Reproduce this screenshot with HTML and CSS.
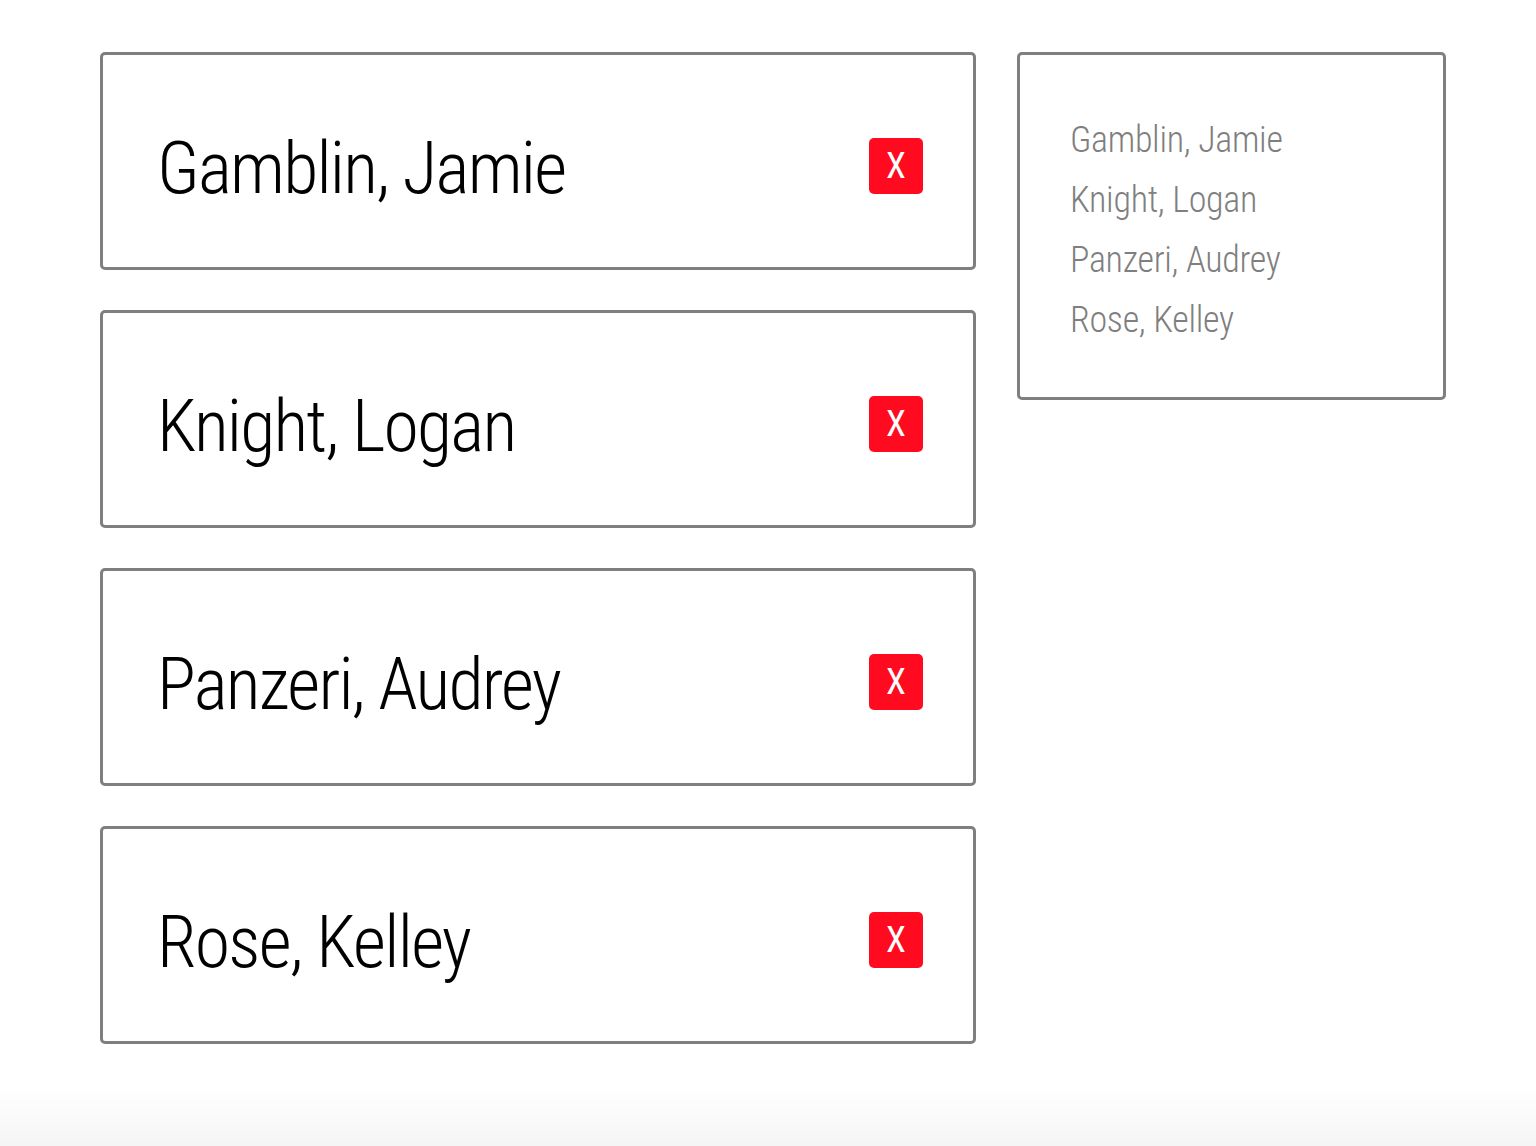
FILE: index.html
```html
<!DOCTYPE html>
<html lang="en">
<head>
<meta charset="utf-8">
<title>Roster</title>
<link rel="stylesheet" href="styles.css">
</head>
<body>
<main class="page">
  <section class="cards">
    <div class="card"><span class="name">Gamblin, Jamie</span><button class="remove" type="button">X</button></div>
    <div class="card"><span class="name">Knight, Logan</span><button class="remove" type="button">X</button></div>
    <div class="card"><span class="name">Panzeri, Audrey</span><button class="remove" type="button">X</button></div>
    <div class="card"><span class="name">Rose, Kelley</span><button class="remove" type="button">X</button></div>
  </section>
  <aside class="summary">
    <ul class="summary-list">
      <li>Gamblin, Jamie</li>
      <li>Knight, Logan</li>
      <li>Panzeri, Audrey</li>
      <li>Rose, Kelley</li>
    </ul>
  </aside>
</main>
</body>
</html>
```
FILE: styles.css
```css
html { height: 100%; }
body {
  margin: 0;
  min-height: 100%;
  background: linear-gradient(to bottom, #ffffff calc(100% - 60px), #f5f5f5 100%);
  font-family: "Roboto Condensed", "Roboto", sans-serif;
  font-stretch: condensed;
}
.page {
  display: flex;
  align-items: flex-start;
  gap: 41px;
  padding: 52px 0 0 100px;
}
.cards {
  display: flex;
  flex-direction: column;
  gap: 40px;
  width: 876px;
}
.card {
  box-sizing: border-box;
  height: 218px;
  border: 3px solid #7f7f7f;
  border-radius: 5px;
  display: flex;
  align-items: center;
  justify-content: space-between;
  padding: 10px 50px 0 54px;
  background: #fff;
}
.name {
  font-size: 72px;
  font-weight: 350;
  letter-spacing: -1.8px;
  color: #000;
  margin-top: 4px;
}
.remove {
  width: 54px;
  height: 56px;
  border: 0;
  border-radius: 5px;
  background: #ff0a1f;
  color: #fff;
  font-family: "Roboto Condensed", "Roboto", sans-serif;
  font-stretch: condensed;
  font-weight: 400;
  font-size: 36px;
  line-height: 56px;
  padding: 0;
}
.summary {
  box-sizing: border-box;
  width: 429px;
  height: 348px;
  border: 3px solid #7f7f7f;
  border-radius: 5px;
  background: #fff;
  padding: 55px 50px 0 50px;
}
.summary-list {
  list-style: none;
  margin: 0;
  padding: 0;
}
.summary-list li {
  font-size: 36px;
  font-weight: 350;
  line-height: 60px;
  letter-spacing: -0.3px;
  color: #7f7f7f;
}
```
